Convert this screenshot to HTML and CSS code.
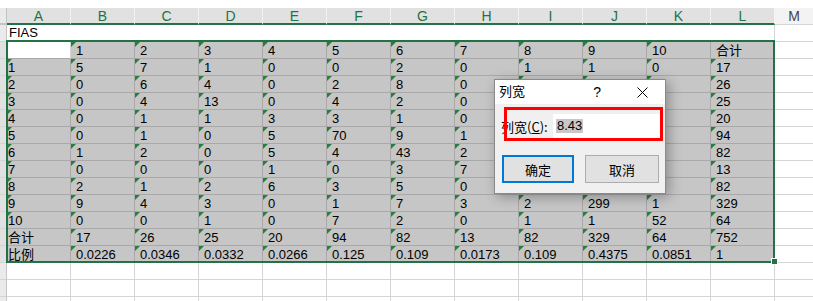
FILE: index.html
```html
<!DOCTYPE html>
<html lang="zh-CN">
<head>
  <meta charset="UTF-8">
  <title>列宽</title>
  <link rel="stylesheet" href="styles.css">
</head>
<body>
  <div class="sheet">
    <div class="grid" id="grid"></div>

    <!-- selection frame + fill handle -->
    <div class="sel-frame"></div>
    <div class="fill-handle"></div>

    <!-- column width dialog -->
    <div class="dlg">
      <div class="dlg-title">
        <span class="dlg-name">列宽</span>
        <span class="dlg-help">?</span>
        <svg class="dlg-close" width="11" height="11" viewBox="0 0 11 11">
          <path d="M0.5 0.5 L10.5 10.5 M10.5 0.5 L0.5 10.5" stroke="#000" stroke-width="1" fill="none"/>
        </svg>
      </div>
      <div class="dlg-body">
        <div class="dlg-row">
          <span class="dlg-label">列宽(<u>C</u>):</span>
          <div class="dlg-input"><span class="picked">8.43</span></div>
        </div>
        <div class="dlg-btns">
          <button class="btn btn-ok">确定</button>
          <button class="btn btn-cancel">取消</button>
        </div>
      </div>
      <div class="mark"></div>
    </div>
  </div>

  <script>
    const rows = [
      ['', '1', '2', '3', '4', '5', '6', '7', '8', '9', '10', '合计'],
      ['1', '5', '7', '1', '0', '0', '2', '0', '1', '1', '0', '17'],
      ['2', '0', '6', '4', '0', '2', '8', '0', '2', '4', '0', '26'],
      ['3', '0', '4', '13', '0', '4', '2', '0', '0', '2', '0', '25'],
      ['4', '0', '1', '1', '3', '3', '1', '0', '1', '10', '0', '20'],
      ['5', '0', '1', '0', '5', '70', '9', '1', '1', '7', '0', '94'],
      ['6', '1', '2', '0', '5', '4', '43', '2', '3', '22', '0', '82'],
      ['7', '0', '0', '0', '1', '0', '3', '7', '0', '2', '0', '13'],
      ['8', '2', '1', '2', '6', '3', '5', '0', '62', '1', '0', '82'],
      ['9', '9', '4', '3', '0', '1', '7', '3', '2', '299', '1', '329'],
      ['10', '0', '0', '1', '0', '7', '2', '0', '1', '1', '52', '64'],
      ['合计', '17', '26', '25', '20', '94', '82', '13', '82', '329', '64', '752'],
      ['比例', '0.0226', '0.0346', '0.0332', '0.0266', '0.125', '0.109', '0.0173', '0.109', '0.4375', '0.0851', '1']
    ];
    const letters = 'ABCDEFGHIJKL'.split('');
    const grid = document.getElementById('grid');

    function cell(cls, text) {
      const d = document.createElement('div');
      d.className = 'c ' + cls;
      if (text) d.textContent = text;
      grid.appendChild(d);
      return d;
    }

    // column headers
    cell('rh corner');
    letters.forEach(l => cell('hd', l));
    cell('hd off', 'M');

    // title row (merged A1:L1)
    cell('rh');
    cell('merge', 'FIAS');
    cell('m');

    rows.forEach((row, r) => {
      cell('rh on');
      row.forEach((v, i) => {
        let cls = i === 0 ? 'a' : 'b';
        if (r === 0 && i === 0) cls += ' act';
        else cls += ' s';
        // numbers stored as text get the green corner
        if (v && !/[合比]/.test(v)) cls += ' n';
        cell(cls, v);
      });
      cell('m');
    });

    for (let r = 0; r < 3; r++) {
      cell('rh');
      letters.forEach(() => cell('e'));
      cell('m');
    }
  </script>
</body>
</html>
```

FILE: styles.css
```css
body {
  margin: 0;
  background: #fff;
  font-family: 'Liberation Sans', 'Noto Sans CJK SC', sans-serif;
  font-size: 13px;
  color: #000;
}

.sheet {
  position: relative;
  width: 813px;
  height: 301px;
  padding-top: 8px;
  box-sizing: border-box;
  overflow: hidden;
}

.grid {
  display: grid;
  grid-template-columns: 7px repeat(12, 64px) 1fr;
  grid-auto-rows: 17px;
}

.c {
  position: relative;
  box-sizing: border-box;
  border-right: 1px solid #d4d4d4;
  border-bottom: 1px solid #d4d4d4;
  white-space: nowrap;
  overflow: hidden;
  line-height: 16px;
  padding-top: 1px;
}

/* headers */
.rh {
  background: #eaeaea;
  border-right-color: #c4c4c4;
}

.rh.on {
  background: #e1e1e1;
}

.corner {
  border-bottom: 2px solid #c4c4c4;
}

.hd {
  background: #e1e1e1;
  color: #217346;
  text-align: center;
  font-size: 14px;
  line-height: 15px;
  padding-top: 1px;
  border-right-color: #f3f3f3;
  border-bottom: 2px solid #217346;
}

.hd.off {
  background: #f3f3f3;
  color: #444;
  border-bottom: 1px solid #d4d4d4;
  border-right: none;
}

.merge {
  grid-column: span 12;
  padding-left: 2px;
  padding-top: 0;
}

.m {
  border-right: none;
}

/* selected cells */
.s {
  background: #c6c6c6;
  border-color: #a9a9a9;
}

.act {
  background: #fff;
  border-bottom-color: #a9a9a9;
}

.a {
  padding-left: 1px;
}

.b {
  padding-left: 5px;
}

.n::before {
  content: '';
  position: absolute;
  left: 0;
  top: 0;
  border-top: 5px solid #24803a;
  border-right: 5px solid transparent;
}

/* selection frame */
.sel-frame {
  position: absolute;
  left: 6px;
  top: 40px;
  width: 769px;
  height: 223px;
  box-sizing: border-box;
  border: 2px solid #217346;
}

.fill-handle {
  position: absolute;
  left: 772px;
  top: 259px;
  width: 5px;
  height: 5px;
  background: #217346;
  outline: 1px solid #fff;
}

/* dialog */
.dlg {
  position: absolute;
  left: 494px;
  top: 79px;
  width: 172px;
  height: 115px;
  box-sizing: border-box;
  background: #f0f0f0;
  border: 1px solid #8a8a8a;
  box-shadow: 3px 3px 12px rgba(0, 0, 0, 0.3);
  font-family: 'Noto Sans CJK SC', 'Liberation Sans', sans-serif;
  font-size: 13px;
}

.dlg-title {
  display: flex;
  align-items: center;
  height: 24px;
  background: #fff;
  padding-left: 4px;
}

.dlg-name {
  flex: 1;
  line-height: 20px;
  margin-top: -2px;
}

.dlg-help {
  font-family: 'Liberation Sans', sans-serif;
  font-size: 14px;
  margin-right: 36px;
}

.dlg-close {
  margin-right: 17px;
}

.dlg-body {
  padding: 10px 0 0 6px;
}

.dlg-row {
  display: flex;
  align-items: center;
}

.dlg-label {
  width: 52px;
}

.dlg-input {
  width: 107px;
  height: 24px;
  background: #fff;
  display: flex;
  align-items: center;
  padding-left: 3px;
  box-sizing: border-box;
  font-family: 'Liberation Sans', sans-serif;
}

.picked {
  background: #c8c8c8;
  line-height: 14px;
  padding: 0 1px;
}

.dlg-btns {
  display: flex;
  gap: 11px;
  margin-top: 17px;
  padding-left: 1px;
}

.btn {
  height: 28px;
  background: #e1e1e1;
  border: 1px solid #adadad;
  font-family: inherit;
  font-size: 13px;
  padding: 0;
  color: #000;
}

.btn-ok {
  width: 72px;
  border: 2px solid #0078d7;
}

.btn-cancel {
  width: 74px;
}

.mark {
  position: absolute;
  left: 9px;
  top: 27px;
  width: 159px;
  height: 34px;
  box-sizing: border-box;
  border: 3px solid #f00;
}
```
